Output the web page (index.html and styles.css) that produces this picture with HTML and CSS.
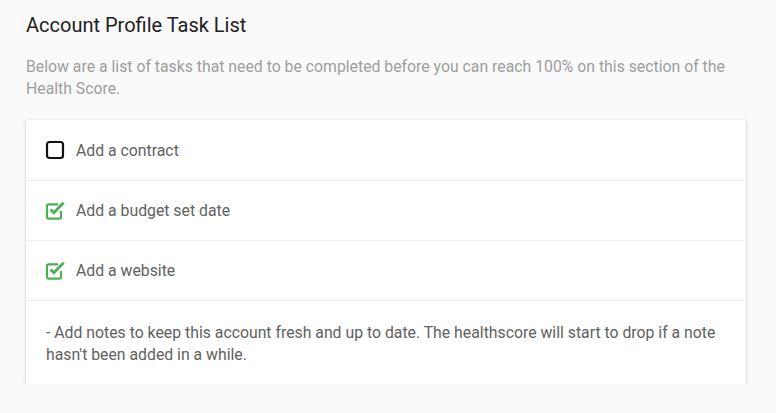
FILE: index.html
```html
<!DOCTYPE html>
<html lang="en">
<head>
  <meta charset="UTF-8">
  <title>Account Profile Task List</title>
  <link rel="stylesheet" href="styles.css">
</head>
<body>
  <div class="section">
    <h2>Account Profile Task List</h2>
    <p class="intro">Below are a list of tasks that need to be completed before you can reach 100% on this section of the Health Score.</p>

    <div class="card">
      <div class="task">
        <svg class="box" width="20" height="20" viewBox="0 0 20 20">
          <rect x="2" y="2" width="16" height="16" rx="2.5" fill="none" stroke="#111" stroke-width="2.2"/>
        </svg>
        <span>Add a contract</span>
      </div>
      <div class="task">
        <svg class="box" width="20" height="20" viewBox="0 0 20 20">
          <path d="M16 11V17a1.6 1.6 0 0 1-1.6 1.6H3.6A1.6 1.6 0 0 1 2 17V6A1.6 1.6 0 0 1 3.6 4.4h9.4" fill="none" stroke="#4caf50" stroke-width="2.2"/>
          <path d="M5.5 9.5l3.3 3.3L18.6 2.6" fill="none" stroke="#4caf50" stroke-width="2.8"/>
        </svg>
        <span>Add a budget set date</span>
      </div>
      <div class="task">
        <svg class="box" width="20" height="20" viewBox="0 0 20 20">
          <path d="M16 11V17a1.6 1.6 0 0 1-1.6 1.6H3.6A1.6 1.6 0 0 1 2 17V6A1.6 1.6 0 0 1 3.6 4.4h9.4" fill="none" stroke="#4caf50" stroke-width="2.2"/>
          <path d="M5.5 9.5l3.3 3.3L18.6 2.6" fill="none" stroke="#4caf50" stroke-width="2.8"/>
        </svg>
        <span>Add a website</span>
      </div>
      <div class="note">
        - Add notes to keep this account fresh and up to date. The healthscore will start to drop if a note hasn't been added in a while.
      </div>
    </div>
  </div>
</body>
</html>
```

FILE: styles.css
```css
body {
  margin: 0;
  background-color: #fafafa;
  font-family: Roboto, "Liberation Sans", sans-serif;
}
.section {
  padding: 13px 30px 0 26px;
}
h2 {
  margin: 0;
  font-size: 20px;
  font-weight: 400;
  line-height: 24px;
  color: #212121;
}
.intro {
  margin: 19px 0 20px;
  font-size: 15.8px;
  line-height: 22px;
  color: #9e9e9e;
}
.card {
  padding-top: 1px;
  background-color: #fff;
  box-shadow: 0 1px 3px rgba(0, 0, 0, 0.22);
}
.task {
  display: flex;
  align-items: center;
  box-sizing: border-box;
  height: 60px;
  padding-left: 19px;
  border-bottom: 1px solid #eee;
  font-size: 15.8px;
  color: #616161;
}
.box {
  margin-right: 11px;
  margin-top: -1px;
}
.note {
  padding: 21px 20px 18px;
  font-size: 15.8px;
  line-height: 22px;
  color: #616161;
}
```
